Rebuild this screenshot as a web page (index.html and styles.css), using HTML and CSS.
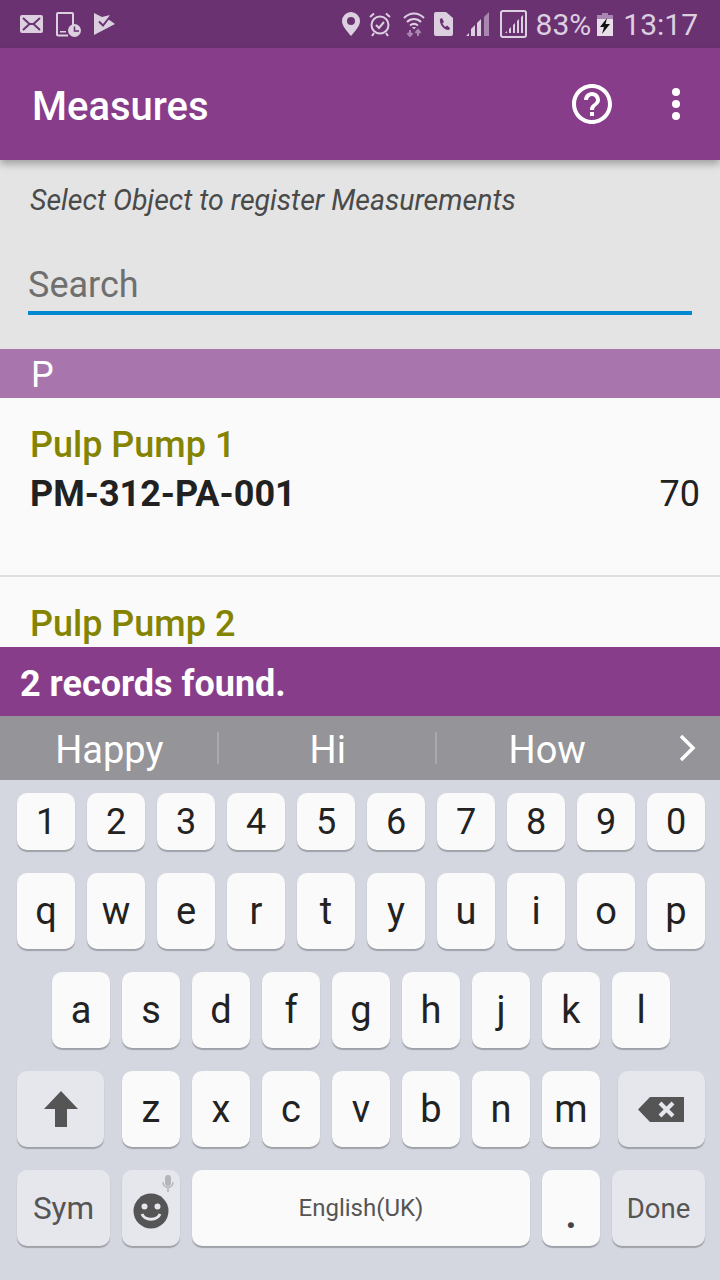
FILE: index.html
```html
<!DOCTYPE html>
<html lang="en">
<head>
  <meta charset="UTF-8">
  <title>Measures</title>
  <link rel="stylesheet" href="styles.css">
</head>
<body>

  <div class="statusbar">
    <svg class="st-mail" width="23" height="18" viewBox="0 0 23 18">
      <rect width="23" height="18" rx="2" fill="#dccfe0"/>
      <path d="M3 3l6.500 6L3 15M20 3l-6.500 6 6.500 6M9.500 9h4" fill="none" stroke="#6b3272" stroke-width="2"/>
    </svg>
    <svg class="st-device" width="25" height="25" viewBox="0 0 25 25">
      <path d="M17 13V2a1 1 0 0 0-1-1H2a1 1 0 0 0-1 1v20.500a1 1 0 0 0 1 1h10" fill="none" stroke="#dccfe0" stroke-width="2"/>
      <rect x="4" y="19" width="6" height="1.500" fill="#dccfe0"/>
      <circle cx="18.500" cy="18.500" r="6.500" fill="#dccfe0"/>
      <path d="M18.500 14.500V19H23" fill="none" stroke="#6b3272" stroke-width="1.500"/>
    </svg>
    <svg class="st-flag" width="21" height="22" viewBox="0 0 21 22">
      <path d="M0 0l8 4 8-2-2 4 7 5L0 22z" fill="#dccfe0"/>
      <path d="M5 8.500l4 4L16.500 3" fill="none" stroke="#6b3272" stroke-width="2"/>
    </svg>

    <svg class="st-pin" width="18" height="24" viewBox="0 0 18 24">
      <path fill-rule="evenodd" d="M9 0a9 9 0 0 1 9 9c0 5-5 10-9 15C5 19 0 14 0 9a9 9 0 0 1 9-9zm0 5a4 4 0 1 0 0 8 4 4 0 0 0 0-8z" fill="#dccfe0"/>
    </svg>
    <svg class="st-alarm" width="22" height="25" viewBox="0 0 22 25">
      <circle cx="11" cy="13" r="8.500" fill="none" stroke="#dccfe0" stroke-width="2"/>
      <path d="M1 5l4-3.500M21 5l-4-3.500M5 21l-2 3M17 21l2 3" fill="none" stroke="#dccfe0" stroke-width="2"/>
      <path d="M7 13l3 3 5-6" fill="none" stroke="#dccfe0" stroke-width="2"/>
    </svg>
    <svg class="st-wifi" width="22" height="25" viewBox="0 0 22 25">
      <path d="M1 6c6-6 14-6 20 0M4 10c4-4 10-4 14 0M7 13.500c2.500-2 5.500-2 8 0" fill="none" stroke="#dccfe0" stroke-width="2"/>
      <path d="M9 15h4l-2 2.500z" fill="#dccfe0"/>
      <path d="M7 18v5M4.500 21l2.500 3 2.500-3M15 24v-5M12.500 21l2.500-3 2.500 3" fill="none" stroke="#a987b0" stroke-width="2"/>
    </svg>
    <svg class="st-sim" width="19" height="24" viewBox="0 0 19 24">
      <path d="M2 0h10l7 6v16a2 2 0 0 1-2 2H2a2 2 0 0 1-2-2V2a2 2 0 0 1 2-2z" fill="#dccfe0"/>
      <path d="M6 7l2-1 2 4-1.500 1.200c.5 1.500 1.500 2.800 3 3.600L13 13.500l3 2.500-1 2c-5 .5-10-6-9-11z" fill="#6b3272"/>
    </svg>
    <svg class="st-signal" width="24" height="24" viewBox="0 0 24 24">
      <path d="M0 24l3-3v3zM5 24v-7l4-4v11zM11 24V11l4-4v17z" fill="#dccfe0"/>
      <path d="M18 24V5l5-5v24z" fill="#a987b0"/>
    </svg>
    <svg class="st-box" width="27" height="28" viewBox="0 0 27 28">
      <rect x="1" y="1" width="25" height="26" rx="2" fill="none" stroke="#dccfe0" stroke-width="2"/>
      <path d="M5 23l2-2v2zM9 23v-4l2-2v6zM13 23v-8l2-2v10zM17 23V11l2-2v14zM21 23V7l2-2v18z" fill="#dccfe0"/>
    </svg>
    <span class="st-pct">83%</span>
    <svg class="st-batt" width="16" height="23" viewBox="0 0 16 23">
      <path d="M5 0h6v2h5v4H0V2h5z" fill="#a987b0"/>
      <rect y="6" width="16" height="17" fill="#e8deea"/>
      <path d="M10 5L3 14h4l-2 7 8-10H8.500z" fill="#111"/>
    </svg>
    <span class="st-time">13:17</span>
  </div>

  <div class="toolbar">
    <h1>Measures</h1>
    <svg class="help" width="48" height="48" viewBox="0 0 24 24">
      <path fill="#fff" d="M11 18h2v-2h-2v2zm1-16C6.480 2 2 6.480 2 12s4.480 10 10 10 10-4.480 10-10S17.520 2 12 2zm0 18c-4.410 0-8-3.590-8-8s3.590-8 8-8 8 3.590 8 8-3.590 8-8 8zm0-14c-2.210 0-4 1.790-4 4h2c0-1.100.9-2 2-2s2 .9 2 2c0 2-3 1.750-3 5h2c0-2.250 3-2.500 3-5 0-2.210-1.790-4-4-4z"/>
    </svg>
    <div class="more"><i></i><i></i><i></i></div>
  </div>

  <div class="content">
    <p class="hint">Select Object to register Measurements</p>
    <div class="search">Search</div>

    <div class="section">P</div>

    <div class="item">
      <div class="item-name">Pulp Pump 1</div>
      <div class="item-row">
        <span class="item-code">PM-312-PA-001</span>
        <span class="item-num">70</span>
      </div>
    </div>
    <div class="item">
      <div class="item-name">Pulp Pump 2</div>
    </div>
  </div>

  <div class="snackbar">2 records found.</div>

  <div class="suggest">
    <span class="word">Happy</span>
    <span class="word">Hi</span>
    <span class="word">How</span>
    <svg class="chevron" width="20" height="28" viewBox="0 0 20 28">
      <path d="M3 2l12 12L3 26" fill="none" stroke="#fff" stroke-width="3.500"/>
    </svg>
  </div>

  <div class="keyboard">
    <div class="row row-num">
      <div class="key">1</div><div class="key">2</div><div class="key">3</div><div class="key">4</div><div class="key">5</div>
      <div class="key">6</div><div class="key">7</div><div class="key">8</div><div class="key">9</div><div class="key">0</div>
    </div>
    <div class="row">
      <div class="key">q</div><div class="key">w</div><div class="key">e</div><div class="key">r</div><div class="key">t</div>
      <div class="key">y</div><div class="key">u</div><div class="key">i</div><div class="key">o</div><div class="key">p</div>
    </div>
    <div class="row row-mid">
      <div class="key">a</div><div class="key">s</div><div class="key">d</div><div class="key">f</div><div class="key">g</div>
      <div class="key">h</div><div class="key">j</div><div class="key">k</div><div class="key">l</div>
    </div>
    <div class="row">
      <div class="key fn key-shift">
        <svg width="34" height="36" viewBox="0 0 34 36"><path d="M17 0l17 18H23v18H11V18H0z" fill="#555"/></svg>
      </div>
      <div class="key">z</div><div class="key">x</div><div class="key">c</div><div class="key">v</div>
      <div class="key">b</div><div class="key">n</div><div class="key">m</div>
      <div class="key fn key-back">
        <svg width="46" height="25" viewBox="0 0 46 25">
          <path d="M12 0h34v25H12L0 12.500z" fill="#555"/>
          <path d="M22 6l13 13M35 6L22 19" stroke="#e6e7ec" stroke-width="4"/>
        </svg>
      </div>
    </div>
    <div class="row">
      <div class="key fn key-sym">Sym</div>
      <div class="key fn key-emoji">
        <svg class="mic" width="12" height="18" viewBox="0 0 12 18">
          <rect x="3" y="0" width="6" height="11" rx="3" fill="#b4b5ba"/>
          <path d="M1 7c0 7 10 7 10 0M6 12v5" fill="none" stroke="#b4b5ba" stroke-width="1.500"/>
        </svg>
        <svg class="smile" width="36" height="36" viewBox="0 0 36 36">
          <circle cx="18" cy="18" r="17.500" fill="#555"/>
          <circle cx="11.500" cy="13.500" r="3" fill="#e6e7ec"/>
          <circle cx="24.500" cy="13.500" r="3" fill="#e6e7ec"/>
          <path d="M9 21c3 7 15 7 18 0" fill="none" stroke="#e6e7ec" stroke-width="3"/>
        </svg>
      </div>
      <div class="key key-space">English(UK)</div>
      <div class="key key-dot">.</div>
      <div class="key fn key-done">Done</div>
    </div>
  </div>

</body>
</html>
```

FILE: styles.css
```css
html, body {
  margin: 0;
  padding: 0;
}
body {
  width: 720px;
  height: 1280px;
  overflow: hidden;
  display: flex;
  flex-direction: column;
  font-family: Roboto, sans-serif;
  background-color: #d4d7e0;
}

/* status bar */
.statusbar {
  height: 48px;
  flex: none;
  display: flex;
  align-items: center;
  padding-left: 20px;
  background-color: #6b3272;
  color: #dccfe0;
  font-size: 30px;
}
.st-device { margin-left: 13px; }
.st-flag { margin-left: 13px; }
.st-pin { margin-left: auto; }
.st-alarm { margin-left: 9px; }
.st-wifi { margin-left: 12px; }
.st-sim { margin-left: 9px; }
.st-signal { margin-left: 13px; }
.st-box { margin-left: 10px; }
.st-pct { margin-left: 9px; }
.st-batt { margin-left: 6px; }
.st-time { margin-left: 10px; margin-right: 22px; }

/* toolbar */
.toolbar {
  height: 112px;
  flex: none;
  display: flex;
  align-items: center;
  padding: 0 40px 0 32px;
  background-color: #873d8a;
  box-shadow: 0 4px 8px rgba(0, 0, 0, 0.3);
  position: relative;
  z-index: 2;
}
.toolbar h1 {
  margin: 0;
  padding-top: 4px;
  flex: 1;
  color: #fff;
  font-size: 40px;
  font-weight: 500;
}
.help {
  margin-right: 56px;
}
.more {
  width: 8px;
  display: flex;
  flex-direction: column;
  gap: 4px;
}
.more i {
  width: 8px;
  height: 8px;
  border-radius: 50%;
  background-color: #fff;
}

/* list area */
.content {
  height: 487px;
  flex: none;
  overflow: hidden;
  background-color: #e4e4e4;
}
.hint {
  margin: 0;
  padding: 24px 30px 0;
  height: 58px;
  box-sizing: border-box;
  font-size: 28.500px;
  font-style: italic;
  color: #4a4a4a;
}
.search {
  margin: 0 28px 34px;
  height: 97px;
  box-sizing: border-box;
  border-bottom: 4px solid #0288d1;
  font-size: 36px;
  line-height: 42px;
  color: #6f6f6f;
  display: flex;
  align-items: flex-end;
  padding-bottom: 5px;
}
.section {
  height: 49px;
  line-height: 52px;
  padding-left: 31px;
  background-color: #a876ac;
  color: #fff;
  font-size: 36px;
}
.item {
  height: 179px;
  box-sizing: border-box;
  padding: 25px 20px 0 30px;
  background-color: #fafafa;
  border-bottom: 2px solid #dedede;
}
.item-name {
  font-size: 36px;
  font-weight: 500;
  line-height: 44px;
  color: #848400;
}
.item-row {
  display: flex;
  justify-content: space-between;
  align-items: center;
  line-height: 54px;
  color: #212121;
  font-size: 36px;
}
.item-code {
  font-weight: 700;
}

/* snackbar */
.snackbar {
  height: 69px;
  flex: none;
  box-sizing: border-box;
  padding-left: 20px;
  line-height: 75px;
  background-color: #873d8a;
  color: #fff;
  font-size: 36px;
  font-weight: 700;
}

/* keyboard */
.suggest {
  height: 64px;
  flex: none;
  display: flex;
  align-items: center;
  background-color: #949499;
  color: #fff;
  font-size: 38px;
}
.word {
  width: 218.500px;
  height: 32px;
  padding-left: 2px;
  line-height: 36px;
  text-align: center;
  border-right: 2px solid #aaaaae;
  box-sizing: border-box;
}
.word:nth-child(3) {
  border-right: 0;
}
.chevron {
  margin-left: 22px;
}
.keyboard {
  flex: 1;
  padding: 13px 15px 0 17px;
  display: flex;
  flex-direction: column;
  gap: 23px;
}
.row {
  display: flex;
  gap: 12px;
  height: 76px;
}
.row-num {
  height: 57px;
}
.row-mid {
  padding-left: 35px;
}
.key {
  width: 58px;
  flex: none;
  display: flex;
  align-items: center;
  justify-content: center;
  background-color: #fafafa;
  border-radius: 10px;
  box-shadow: 0 2px 1px rgba(0, 0, 0, 0.25);
  color: #222;
  font-size: 38px;
}
.row-num .key {
  font-size: 36px;
}
.fn {
  background-color: #e6e7ec;
  color: #555;
  font-size: 31.500px;
}
.key-shift {
  width: 87px;
  margin-right: 6px;
}
.key-back {
  width: 87px;
  margin-left: 6px;
  padding-right: 2px;
  box-sizing: border-box;
}
.key-sym {
  width: 93px;
}
.key-emoji {
  position: relative;
}
.mic {
  position: absolute;
  top: 5px;
  right: 6px;
}
.smile {
  margin-top: 5px;
}
.key-space {
  width: 338px;
  font-size: 24px;
  color: #555;
}
.key-dot {
  font-weight: 700;
  color: #444;
  padding-top: 14px;
  box-sizing: border-box;
}
.key-done {
  width: 93px;
  font-size: 27.500px;
}
```
